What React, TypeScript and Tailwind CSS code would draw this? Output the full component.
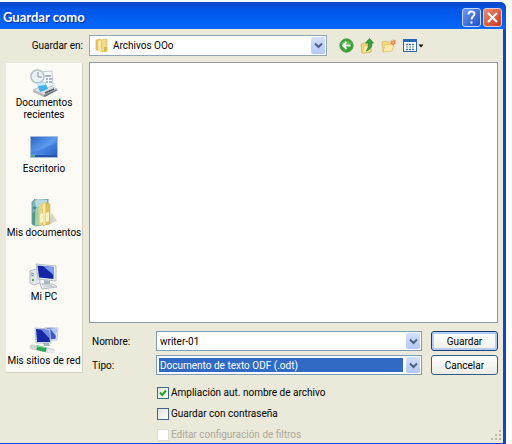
import { useState } from "react";
import type { ReactNode } from "react";

function RecentIcon() {
  return (
    <svg width="32" height="28" viewBox="0 0 32 28" aria-hidden="true">
      <path d="m6 23 13-6 11 4-13 7z" fill="#6d747b" />
      <path d="m5 21 13-6 11 5-13 6z" fill="#dfe2e4" stroke="#a3a9af" strokeWidth=".7" />
      <path d="m5 21 11 5v2L5 23z" fill="#b5bbc1" />
      <path d="m12 3 12-1 1 15-11 3z" fill="#f7fafc" stroke="#b3bfca" strokeWidth=".8" />
      <path d="M17 7h6M18 10h2M21 10h3M18 13h2M21 13h3" stroke="#8d9db0" strokeWidth="1.500" />
      <circle cx="9.500" cy="7.500" r="6.500" fill="#eaf0f3" stroke="#b5c1c9" strokeWidth="1.500" />
      <path d="M10 3v5h4" stroke="#8595a2" fill="none" />
      <path d="m9 14 8-1 3 7-8 3z" fill="#3fb1ea" />
      <path d="m9 14 8-1 1 3-8 1z" fill="#c3ebfa" />
      <path d="m17 24 9-4" stroke="#4e565e" strokeWidth="1.500" />
    </svg>
  );
}

function DesktopIcon() {
  return (
    <svg width="32" height="28" viewBox="0 0 32 28" aria-hidden="true">
      <defs>
        <linearGradient id="desk" x1="0" y1="0" x2="1" y2="1">
          <stop offset="0" stopColor="#2b62bd" />
          <stop offset=".5" stopColor="#5b9af0" />
          <stop offset="1" stopColor="#2458bd" />
        </linearGradient>
      </defs>
      <rect x="2.500" y="1.500" width="27" height="21" fill="url(#desk)" stroke="#a4bbdc" />
      <path d="M3 18 29 8v11H3z" fill="#245ec4" opacity=".3" />
      <path d="M3 20h26v2H3z" fill="#2552ae" />
      <path d="M3 20h4v2H3z" fill="#4ea88a" />
    </svg>
  );
}

function DocumentsIcon() {
  return (
    <svg width="32" height="28" viewBox="0 0 32 28" aria-hidden="true">
      <path d="m19 26 10-4-5-8z" fill="#d5d5cd" />
      <path d="m4 3 4-4 12 1v25l-13 2-3-2z" fill="#82b5b5" stroke="#5f999f" strokeWidth=".8" />
      <path d="m7 2 3-2 9 1v5L8 8z" fill="#b5dce4" />
      <circle cx="6.500" cy="9" r="1.400" fill="#3c7fa0" />
      <path d="m4 14 3-2v14l-3-1z" fill="#559a8c" />
      <path d="m8 9 4-2v19l-5 1z" fill="#a9d0a0" />
      <path d="m11 6 4-2 1 21-5 2z" fill="#ebd57b" />
      <path d="m14 5 4-2 1 22-4 2z" fill="#f5e9a9" stroke="#d3b957" strokeWidth=".6" />
      <path d="m18 4 4 1v20l-4 1z" fill="#dfc35a" stroke="#c3a446" strokeWidth=".5" />
      <path d="m12 15 3-1v9l-3 1zM18 14l3-1v9l-3 1z" fill="#f9f1c1" />
    </svg>
  );
}

function ComputerIcon() {
  return (
    <svg width="32" height="28" viewBox="0 0 32 28" aria-hidden="true">
      <path d="m2 8 6-2 4 1v13l-6 2-4-2z" fill="#e2e5e9" stroke="#a6adb5" strokeWidth=".8" />
      <path d="m3 10 3 1M3 12l3 1" stroke="#7f8d9d" />
      <path d="M4 17h2" stroke="#44b04b" strokeWidth="2" />
      <path d="m8 1 20 2v15L10 16z" fill="#e9edf1" stroke="#a4aebb" strokeWidth=".8" />
      <path d="m9.500 2.500 16 1.500v12L11 14.500z" fill="#1526a5" />
      <path d="m15 3 10.500 1v8z" fill="#7b9df0" />
      <path d="m16 17 6 1v3h-6z" fill="#aeb6c0" />
      <path d="m12 21 13 0 4 3-15 2z" fill="#f0f2f4" stroke="#9fa8b2" strokeWidth=".8" />
      <path d="m14 22 10 .5M15 24l11-.5" stroke="#bcc3ca" strokeWidth=".8" />
    </svg>
  );
}

function NetworkIcon() {
  return (
    <svg width="32" height="28" viewBox="0 0 32 28" aria-hidden="true">
      <path d="m17 0 13 1-1 12-11 1z" fill="#e1e7f2" stroke="#b2bdcf" strokeWidth=".7" />
      <path d="m19 1 9.500 1-1 10H19z" fill="#3d55c8" />
      <path d="m22 1.500 6.500.5-.5 7z" fill="#b1c6fa" />
      <path d="m7 1 15 1 1 14-15 0z" fill="#dfe6f2" stroke="#9ba9c0" strokeWidth=".7" />
      <path d="m8 2 13 1 1 12H9z" fill="#1729a6" />
      <path d="m13 2.500 8 .5 1 9z" fill="#6e8eea" />
      <path d="m15 16h6l1 3h-6z" fill="#aab3bd" />
      <path d="m4 20 20 4" stroke="#cdd3d0" strokeWidth="5" strokeLinecap="round" />
      <path d="m9 20.500 9 2.500" stroke="#2ba84f" strokeWidth="4.500" />
      <path d="m8 19 9 1.500" stroke="#86dfa0" strokeWidth="1.200" />
      <path d="m21 24 3 .5" stroke="#e9edef" strokeWidth="3.500" strokeLinecap="round" />
    </svg>
  );
}

function FolderIcon() {
  return (
    <svg width="14" height="15" viewBox="0 0 14 15" aria-hidden="true">
      <path d="m1 2 5-1v12l-5-1z" fill="#e6c562" stroke="#d0b055" strokeWidth=".6" />
      <path d="m6 2 6-1v12l-5 1z" fill="#f3dc85" stroke="#cfae50" strokeWidth=".6" />
      <path d="m3 3 3-1v12l-3-1z" fill="#f8e9aa" />
      <path d="M9 9h3v4l-3 1z" fill="#dfb94c" />
    </svg>
  );
}

function BackIcon() {
  return (
    <svg width="15" height="15" viewBox="0 0 15 15" aria-hidden="true">
      <circle cx="7.500" cy="7.500" r="6.700" fill="#39a136" stroke="#4d9c4b" strokeWidth=".8" />
      <path d="M2 6a6 5 0 0 1 11 0z" fill="#78cb70" opacity=".65" />
      <path d="M11.500 7.500H4.500M7.500 4 4 7.500 7.500 11" fill="none" stroke="#fff" strokeWidth="1.900" />
    </svg>
  );
}

function UpIcon() {
  return (
    <svg width="15" height="16" viewBox="0 0 15 16" aria-hidden="true">
      <path d="m1 6 4-1 1 1h5v8l-9 1z" fill="#f4d97b" stroke="#d3b04f" strokeWidth=".7" />
      <path d="m4 8 8-1-2 7-8 1z" fill="#fae99d" stroke="#d3b04f" strokeWidth=".6" />
      <path d="M6 13c2-2 2.500-4 2.500-8H5.500l4-4.500 4 4.500H12c0 4-2 7-6 8z" fill="#37a334" stroke="#2c7b30" strokeWidth=".7" />
    </svg>
  );
}

function NewFolderIcon() {
  return (
    <svg width="16" height="15" viewBox="0 0 16 15" aria-hidden="true">
      <path d="m1 4 4-1 1 1h5v8l-9 2z" fill="#f4d983" stroke="#d9b762" strokeWidth=".7" />
      <path d="m4 7 9-1-2 7-9 1z" fill="#fbebaa" stroke="#d9b762" strokeWidth=".6" />
      <path d="m12 1 .8 1.500 2.200-.5-1 2 1.500 1.500-2.200.4L12 8l-1-1.800L8.800 6l1.600-1.500-.8-2 2 .5z" fill="#e9804c" />
      <circle cx="12" cy="4.500" r="1.200" fill="#f5ae7a" />
    </svg>
  );
}

function ViewIcon() {
  return (
    <svg width="21" height="14" viewBox="0 0 21 14" aria-hidden="true">
      <rect x=".5" y=".5" width="13" height="12" fill="#fff" stroke="#2e69ad" />
      <path d="M0 0h14v3H0z" fill="#2767b8" />
      <path d="M3 5.500h2M6 5.500h2M9 5.500h2M3 10.500h2M6 10.500h2M9 10.500h2" stroke="#3978b8" strokeWidth="1.600" />
      <path d="M3 8h2M6 8h2M9 8h2" stroke="#84b49a" strokeWidth="1.600" />
      <path d="M15.500 5.500h5L18 8.500z" fill="#111" />
    </svg>
  );
}

function Chevron() {
  return (
    <svg width="9" height="7" viewBox="0 0 9 7" aria-hidden="true">
      <path d="m1 1.500 3.500 3.500L8 1.500" fill="none" stroke="#4d6185" strokeWidth="2" />
    </svg>
  );
}

const dropButton =
  "flex w-[14px] items-center justify-center rounded-xs bg-linear-to-b from-[#d3e0fc] to-[#b4c8f6]";

const places = [
  { label: "Documentos recientes", icon: <RecentIcon />, gap: "mb-[14px]" },
  { label: "Escritorio", icon: <DesktopIcon />, gap: "mb-6" },
  { label: "Mis documentos", icon: <DocumentsIcon />, gap: "mb-6" },
  { label: "Mi PC", icon: <ComputerIcon />, gap: "mb-6" },
  { label: "Mis sitios de red", icon: <NetworkIcon />, gap: "mb-[5px]" },
];

function Place({ label, icon, gap }: { label: string; icon: ReactNode; gap: string }) {
  return (
    <button type="button" className={`flex w-full flex-col items-center leading-[12px] ${gap}`}>
      {icon}
      <span className={label === "Documentos recientes" ? "w-16" : "whitespace-nowrap"}>{label}</span>
    </button>
  );
}

function Option({
  label,
  checked = false,
  disabled = false,
}: {
  label: string;
  checked?: boolean;
  disabled?: boolean;
}) {
  const [on, setOn] = useState(checked);
  return (
    <label className={`flex items-center gap-[2px] ${disabled ? "text-[#aca899]" : ""}`}>
      <span className="relative flex size-3">
        <input
          type="checkbox"
          checked={on}
          disabled={disabled}
          onChange={e => setOn(e.target.checked)}
          className="size-3 appearance-none border border-[#40678a] bg-linear-to-br from-[#dfe3dc] to-white disabled:border-[#dedbcb] disabled:from-white"
        />
        {on && (
          <svg className="pointer-events-none absolute inset-0" viewBox="0 0 12 12" aria-hidden="true">
            <path d="m3 5.500 2.200 2.500L9 3.500" fill="none" stroke="#27a02a" strokeWidth="2" />
          </svg>
        )}
      </span>
      {label}
    </label>
  );
}

export default function App() {
  const [name, setName] = useState("writer-01");
  return (
    <div className="bg-white pt-[2px] pr-[6px] font-[Roboto,'Liberation_Sans',sans-serif] text-[10px] leading-[13px] text-black">
      <form
        className="rounded-tr-md border-r-3 border-b-2 border-[#0b46cf] bg-[#ebe9d9]"
        onSubmit={e => e.preventDefault()}
        aria-labelledby="title"
      >
        <header className="-mr-[3px] flex h-[27px] items-center justify-between rounded-tr-md bg-linear-to-b from-[#0a46c6] via-[#0055e6] via-25% to-[#0568fc] pt-1 pr-1 pl-[3px]">
          <h1 id="title" className="font-[Lato,'Open_Sans',sans-serif] text-[13px] font-bold text-white text-shadow-[1px_1px_0_#0a2f95]">
            Guardar como
          </h1>
          <div className="flex gap-[2px]">
            <button type="button" aria-label="Ayuda" className="flex size-[19px] items-center justify-center rounded-[3px] border border-[#c5d8fa] bg-linear-to-br from-[#6e96ee] to-[#1f4fcb]">
              <svg width="13" height="15" viewBox="0 0 13 15" aria-hidden="true">
                <path d="M3.500 4.500c0-4 6-4 6-.5 0 2.300-3 2.300-3 5.500M6.500 11.500v2" fill="none" stroke="#fff" strokeWidth="1.900" />
              </svg>
            </button>
            <button type="button" aria-label="Cerrar" className="flex size-[19px] items-center justify-center rounded-[3px] border border-[#e8c9cb] bg-linear-to-br from-[#ec8b70] to-[#c5371b]">
              <svg width="13" height="13" viewBox="0 0 13 13" aria-hidden="true">
                <path d="m2 2 9 9M11 2l-9 9" stroke="#fff" strokeWidth="2" />
              </svg>
            </button>
          </div>
        </header>

        <div className="flex items-center pt-[6px] pr-[5px]">
          <label htmlFor="folder" className="w-[83px] text-right">Guardar en:</label>
          <div className="relative ml-[6px] flex h-[21px] flex-1 border border-[#8fa6b8] bg-white p-px">
            <span className="pointer-events-none absolute top-[2px] left-[5px]"><FolderIcon /></span>
            <select id="folder" className="w-full appearance-none pl-[22px] outline-none">
              <option>Archivos OOo</option>
            </select>
            <span className={`${dropButton} pointer-events-none absolute inset-y-px right-px`}><Chevron /></span>
          </div>
          <div className="ml-3 flex w-[159px] items-center gap-[6px]">
            <button type="button" aria-label="Atrás"><BackIcon /></button>
            <button type="button" aria-label="Subir un nivel"><UpIcon /></button>
            <button type="button" aria-label="Nueva carpeta"><NewFolderIcon /></button>
            <button type="button" aria-label="Vistas"><ViewIcon /></button>
          </div>
        </div>

        <div className="flex items-start gap-[6px] pt-[6px] pr-[5px] pl-[6px]">
          <nav aria-label="Lugares" className="mt-px w-[77px] shrink-0 border-r border-b border-[#d3d0c0] bg-[#fbfaf5] pt-[6px]">
            {places.map(place => (
              <Place key={place.label} {...place} />
            ))}
          </nav>

          <div className="min-w-0 flex-1">
            <div role="listbox" aria-label="Archivos" className="h-[261px] border border-[#8c9ba8] bg-white" />

            <div className="mt-2 grid grid-cols-[65px_1fr_67px] items-center gap-y-1">
              <label htmlFor="name" className="pl-[3px]">Nombre:</label>
              <div className="mr-[9px] ml-[2px] flex h-[20px] border border-[#7f9db9] bg-white p-px">
                <input
                  id="name"
                  value={name}
                  onChange={e => setName(e.target.value)}
                  className="min-w-0 flex-1 pl-[2px] outline-none"
                />
                <button type="button" aria-label="Nombres recientes" className={dropButton}><Chevron /></button>
              </div>
              <button type="submit" className="h-5 rounded-[3px] border border-[#123f78] bg-linear-to-b from-white to-[#efeee8] shadow-[inset_0_0_0_2px_#b5cdf5]">
                Guardar
              </button>

              <label htmlFor="type" className="pl-[3px]">Tipo:</label>
              <div className="relative mr-[9px] ml-[2px] flex h-[20px] border border-[#7f9db9] bg-white py-[2px] pr-[18px] pl-[2px]">
                <select id="type" className="w-full appearance-none bg-[#316ac5] pl-px text-white outline-none">
                  <option>Documento de texto ODF (.odt)</option>
                </select>
                <span className={`${dropButton} pointer-events-none absolute inset-y-px right-px`}><Chevron /></span>
              </div>
              <button type="button" className="h-5 rounded-[3px] border border-[#315d83] bg-linear-to-b from-white to-[#ecebe4]">
                Cancelar
              </button>
            </div>
          </div>
        </div>

        <div className="flex items-end justify-between pt-[11px] pb-[2px] pl-[157px]">
          <div className="flex flex-col gap-2">
            <Option label="Ampliación aut. nombre de archivo" checked />
            <Option label="Guardar con contraseña" />
            <Option label="Editar configuración de filtros" disabled />
          </div>
          <svg width="12" height="12" viewBox="0 0 12 12" aria-hidden="true">
            <path d="M8 1h2v2H8zM4 5h2v2H4zM8 5h2v2H8zM0 9h2v2H0zM4 9h2v2H4zM8 9h2v2H8z" fill="#bbb7a5" />
          </svg>
        </div>
      </form>
    </div>
  );
}
